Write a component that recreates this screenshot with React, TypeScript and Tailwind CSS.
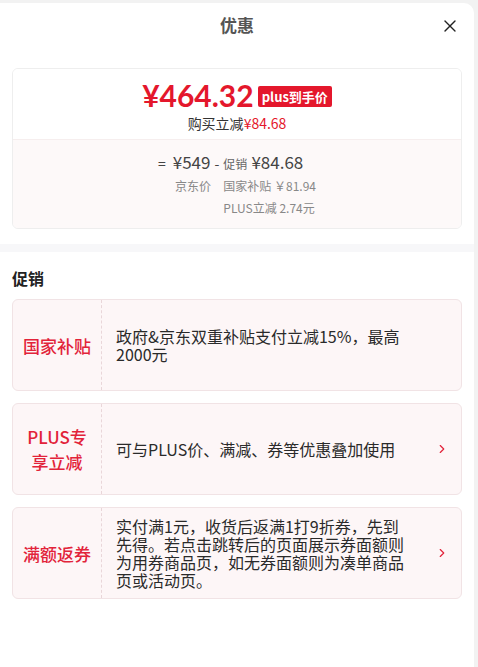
import React from 'react';
import { X, ChevronRight } from 'lucide-react';

const FONT = "font-['Noto_Sans_CJK_SC','Noto_Sans',sans-serif]";

interface Promo {
  label: React.ReactNode;
  text: string;
  arrow: boolean;
}

const promos: Promo[] = [
  { label: '国家补贴', text: '政府&京东双重补贴支付立减15%，最高2000元', arrow: false },
  { label: <>PLUS专<br />享立减</>, text: '可与PLUS价、满减、券等优惠叠加使用', arrow: true },
  {
    label: '满额返券',
    text: '实付满1元，收货后返满1打9折券，先到先得。若点击跳转后的页面展示券面额则为用券商品页，如无券面额则为凑单商品页或活动页。',
    arrow: true,
  },
];

const PromoCard: React.FC<{ promo: Promo }> = ({ promo }) => (
  <div className="flex h-[92px] rounded-md border border-[#f1e3e5] bg-[#fdf6f7]">
    <div className="flex w-[89px] shrink-0 items-center justify-center border-r border-dashed border-[#e9d6d9] text-center text-[17px] font-medium leading-[25px] text-[#e2233a]">
      {promo.label}
    </div>
    <div className="flex flex-1 items-center pl-[14px] pr-[10px]">
      <p className="w-[292px] text-[16px] leading-[18px] text-[#2a2a2a]">{promo.text}</p>
      {promo.arrow && <ChevronRight size={14} strokeWidth={2} className="ml-auto mr-[2px] text-[#e2233a]" />}
    </div>
  </div>
);

export default function App() {
  return (
    <div className={`min-h-[667px] bg-[#f2f2f2] pt-[3px] ${FONT}`}>
      <div className="w-[474px] min-h-[664px] rounded-tr-[10px] bg-white">
        {/* Header */}
        <div className="relative flex h-[44px] items-center justify-center">
          <h1 className="text-[17px] font-bold text-[#555]">优惠</h1>
          <X size={20} strokeWidth={1.6} className="absolute right-[14px] top-[13px] text-[#222]" />
        </div>

        {/* Price card */}
        <div className="mx-[12px] mt-[21px] overflow-hidden rounded-md border border-[#eeeeee]">
          <div className="flex flex-col items-center bg-white pb-[6px] pt-[8px]">
            <div className="flex items-center gap-[4px]">
              <span className="font-['Lato',sans-serif] text-[30px] font-bold leading-[36px] text-[#e4172c]">¥464.32</span>
              <span className="mt-[2px] rounded-[2px] bg-[#e4172c] px-[4px] text-[13px] font-bold leading-[21px] text-white">plus到手价</span>
            </div>
            <div className="text-[14px] leading-[20px] text-[#333]">
              购买立减<span className="text-[#e4172c]">¥84.68</span>
            </div>
          </div>
          <div className="flex justify-center border-t border-[#f6eeee] bg-[#fdf9f9] pb-[9px] pt-[9px]">
            <div className="flex">
              <div className="flex flex-col">
                <div className="flex items-baseline text-[#444]">
                  <span className="mr-[7px] text-[14px]">=</span>
                  <span className="text-[17px] leading-[26px]">¥549</span>
                  <span className="mx-[4px] text-[14px]">-</span>
                </div>
                <div className="pl-[17px] text-[12px] leading-[22px] text-[#888]">京东价</div>
              </div>
              <div className="flex flex-col">
                <div className="flex items-baseline text-[#444]">
                  <span className="mr-[4px] text-[12px] text-[#666]">促销</span>
                  <span className="text-[17px] leading-[26px]">¥84.68</span>
                </div>
                <div className="text-[12px] leading-[22px] text-[#888]">国家补贴 ￥81.94</div>
                <div className="text-[12px] leading-[22px] text-[#888]">PLUS立减 2.74元</div>
              </div>
            </div>
          </div>
        </div>

        {/* Divider band */}
        <div className="mt-[15px] h-[8px] bg-[#f7f7f9]" />

        {/* Promotions */}
        <div className="px-[12px] pt-[15px]">
          <h2 className="mb-[10px] text-[16px] font-bold leading-[22px] text-[#222]">促销</h2>
          <div className="flex flex-col gap-[12px]">
            {promos.map((p, i) => (
              <PromoCard key={i} promo={p} />
            ))}
          </div>
        </div>
      </div>
    </div>
  );
}
